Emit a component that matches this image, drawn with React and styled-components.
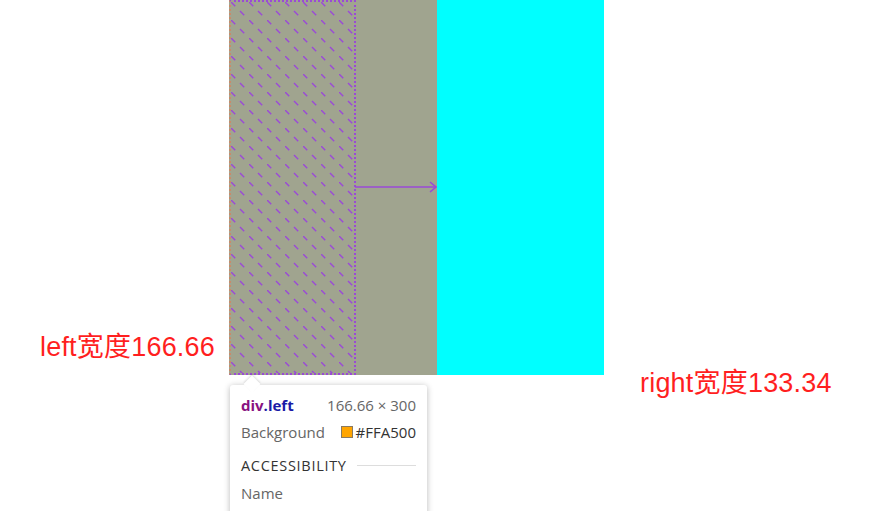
import React from 'react';
import styled, { createGlobalStyle } from 'styled-components';

const GlobalStyle = createGlobalStyle`
  html, body {
    margin: 0;
    padding: 0;
    background: #ffffff;
  }
`;

export default function App() {
  return (
    <>
      <GlobalStyle />
      <Page>
        <Stage>
          <Caption $side="left">left宽度166.66</Caption>
          <FlexBox>
            <LeftItem>
              <Hatch>
                <svg width="100%" height="100%">
                  <defs>
                    <pattern id="hatch" width="18" height="18" patternUnits="userSpaceOnUse">
                      <line x1="0" y1="0" x2="18" y2="18" stroke="#9a4ad6" strokeWidth="1.5" strokeDasharray="6 6.7" />
                    </pattern>
                  </defs>
                  <rect width="100%" height="100%" fill="url(#hatch)" />
                </svg>
              </Hatch>
              <GrowArrow width="83" height="12" viewBox="0 0 83 12">
                <line x1="0" y1="6" x2="81" y2="6" stroke="#9a4ad6" strokeWidth="1.6" />
                <polyline points="75,1 81,6 75,11" fill="none" stroke="#9a4ad6" strokeWidth="1.6" />
              </GrowArrow>
            </LeftItem>
            <RightItem />
          </FlexBox>
          <Caption $side="right">right宽度133.34</Caption>
        </Stage>

        <Tooltip>
          <TipRow>
            <Selector>
              <Tag>div</Tag><ClassName>.left</ClassName>
            </Selector>
            <Muted>166.66 × 300</Muted>
          </TipRow>
          <TipRow>
            <Muted>Background</Muted>
            <ColorValue>
              <Swatch $color="#FFA500" />#FFA500
            </ColorValue>
          </TipRow>
          <SectionHead>
            <span>ACCESSIBILITY</span>
            <Rule />
          </SectionHead>
          <TipRow>
            <Muted>Name</Muted>
            <Muted></Muted>
          </TipRow>
          <TipRow>
            <Muted>Role</Muted>
            <Muted>generic</Muted>
          </TipRow>
        </Tooltip>
      </Page>
    </>
  );
}

const Page = styled.div`
  position: relative;
  width: 896px;
  height: 511px;
  overflow: hidden;
  background: #ffffff;
`;

const Stage = styled.div`
  display: flex;
  align-items: flex-start;
`;

const Caption = styled.div`
  font-family: "Liberation Sans", "Noto Sans CJK SC", sans-serif;
  font-size: 27px;
  line-height: 30px;
  letter-spacing: 0.2px;
  color: #ff1f1f;
  white-space: nowrap;
  box-sizing: border-box;
  width: ${p => (p.$side === 'left' ? '229px' : 'auto')};
  padding-left: ${p => (p.$side === 'left' ? '40px' : '36px')};
  margin-top: ${p => (p.$side === 'left' ? '332px' : '368px')};
`;

const FlexBox = styled.div`
  display: flex;
  height: 375px;
`;

const LeftItem = styled.div`
  position: relative;
  width: 208px;
  background: #a0a48f;
`;

const RightItem = styled.div`
  width: 167px;
  background: #00ffff;
`;

const Hatch = styled.div`
  position: absolute;
  left: 0;
  top: 0;
  width: 127px;
  height: 375px;
  box-sizing: border-box;
  border: 2px dotted #9a4ad6;
  border-left-color: #c98a6a;
  svg { display: block; }
`;

const GrowArrow = styled.svg`
  position: absolute;
  left: 126px;
  top: 181px;
`;

const Tooltip = styled.div`
  position: absolute;
  left: 230px;
  top: 385px;
  width: 197px;
  box-sizing: border-box;
  padding: 6px 11px 10px;
  background: #ffffff;
  border-radius: 3px;
  box-shadow: 0 1px 6px rgba(0, 0, 0, 0.28);
  font-family: "Open Sans", "Noto Sans", sans-serif;
  font-size: 15px;

  &::before {
    content: "";
    position: absolute;
    left: 16px;
    top: -7px;
    width: 12px;
    height: 12px;
    background: #ffffff;
    transform: rotate(45deg);
    box-shadow: -1px -1px 2px rgba(0, 0, 0, 0.12);
  }
`;

const TipRow = styled.div`
  position: relative;
  display: flex;
  justify-content: space-between;
  align-items: center;
  height: 27px;
  white-space: nowrap;
`;

const Selector = styled.span`
  font-weight: 700;
`;

const Tag = styled.span`
  color: #881280;
`;

const ClassName = styled.span`
  color: #1a1aa6;
`;

const Muted = styled.span`
  color: #666666;
`;

const ColorValue = styled.span`
  display: flex;
  align-items: center;
  color: #333333;
`;

const Swatch = styled.span`
  width: 12px;
  height: 12px;
  margin-right: 3px;
  box-sizing: border-box;
  border: 1px solid #8a7a60;
  background: ${p => p.$color};
`;

const SectionHead = styled.div`
  display: flex;
  align-items: center;
  height: 28px;
  margin-top: 6px;
  font-size: 14.5px;
  letter-spacing: 0.7px;
  color: #333333;
`;

const Rule = styled.div`
  flex: 1;
  height: 1px;
  margin-left: 10px;
  background: #dddddd;
`;
